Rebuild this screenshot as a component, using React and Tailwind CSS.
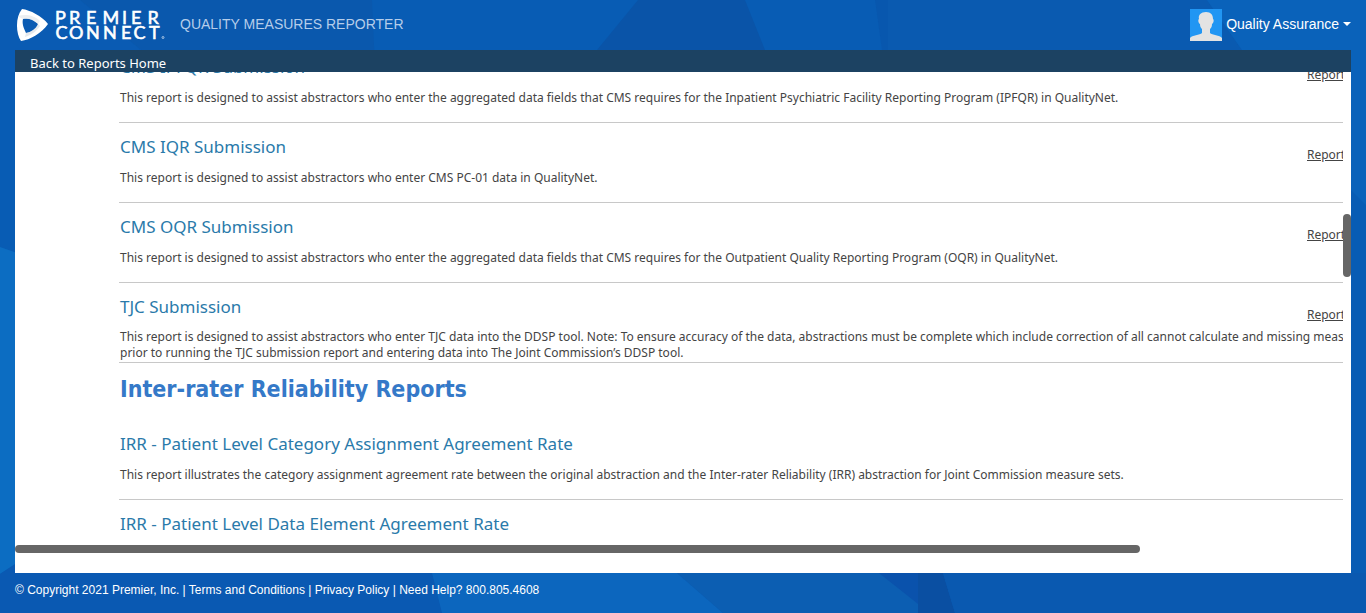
const GROUPS = [
  {
    title: null,
    reports: [
      { name: 'CMS IPFQR Submission', text: 'This report is designed to assist abstractors who enter the aggregated data fields that CMS requires for the Inpatient Psychiatric Facility Reporting Program (IPFQR) in QualityNet.' },
      { name: 'CMS IQR Submission', text: 'This report is designed to assist abstractors who enter CMS PC-01 data in QualityNet.' },
      { name: 'CMS OQR Submission', text: 'This report is designed to assist abstractors who enter the aggregated data fields that CMS requires for the Outpatient Quality Reporting Program (OQR) in QualityNet.' },
      { name: 'TJC Submission', text: 'This report is designed to assist abstractors who enter TJC data into the DDSP tool. Note: To ensure accuracy of the data, abstractions must be complete which include correction of all cannot calculate and missing measures', more: 'prior to running the TJC submission report and entering data into The Joint Commission’s DDSP tool.' },
    ],
  },
  {
    title: 'Inter-rater Reliability Reports',
    reports: [
      { name: 'IRR - Patient Level Category Assignment Agreement Rate', noLink: true, text: 'This report illustrates the category assignment agreement rate between the original abstraction and the Inter-rater Reliability (IRR) abstraction for Joint Commission measure sets.' },
      { name: 'IRR - Patient Level Data Element Agreement Rate', noLink: true },
    ],
  },
];

function Backdrop() {
  return (
    <svg className="absolute inset-0 -z-10 h-full w-full" viewBox="0 0 1366 613" preserveAspectRatio="none" aria-hidden="true">
      <rect width="1366" height="613" fill="#085cb4" />
      <path d="M0 0H80L190 90H0Z" fill="#0a5bb3" />
      <path d="M80 0H372L376 90H190Z" fill="#0a58ad" />
      <path d="M638 0H745L765 50H597Z" fill="#0a54a8" />
      <path d="M875 0H888V50H882Z" fill="#0857ae" />
      <path d="M888 0H1207L1242 50H888Z" fill="#0a5ab0" />
      <path d="M1207 0H1366V205L1346 185L1242 50Z" fill="#0a62ba" />
      <path d="M0 247L20 254V561L0 574Z" fill="#0c6dc2" />
      <path d="M0 574L20 561L432 573L442 613H0Z" fill="#0a59b2" />
      <path d="M432 573H677L723 613H442Z" fill="#0c66be" />
      <path d="M677 573H879L932 613H723Z" fill="#0c5eb2" />
      <path d="M879 573H918V604Z" fill="#0a52ac" />
      <path d="M918 573H943L955 613H918Z" fill="#0a4fa2" />
      <path d="M943 573H1366V613H955Z" fill="#0a59b0" />
    </svg>
  );
}

function Logo() {
  return (
    <a href="#home" aria-label="Premier Connect" className="block text-white">
      <svg width="150" height="34" viewBox="0 0 150 34" aria-hidden="true" className="block">
        <path fill="#fff" fillRule="evenodd" d="M7 1C15 2 27 8 33 16C27 25 15 32 6 33C1 26 0 9 7 1ZM8 11C7 15 8 19 11 25C16 24 21 21 23 16C18 11 13 10 8 11Z" />
        <path fill="#cfd6de" d="M3 8C5 10 7 10 8 11C13 10 18 11 23 16L25 13C19 7 10 6 3 8Z" opacity=".4" />
        <path fill="#bfc8d2" d="M11 25C16 24 21 21 23 16L25 18C22 23 16 27 10 29Z" opacity=".4" />
        <g fill="#fff" stroke="#fff" strokeWidth=".6" fontFamily="Lato, sans-serif" fontSize="18">
          <text x="40 54 71 87.5 107 116 132.5" y="16">PREMIER</text>
          <text x="40.5 54 71 88 106 118.5 134" y="30.5">CONNECT</text>
        </g>
        <circle cx="148" cy="29.5" r="1" fill="none" stroke="#fff" strokeWidth=".6" />
      </svg>
    </a>
  );
}

function Report({ report }) {
  return (
    <li className="flex h-20 border-b border-[#c8c8c8] pl-px">
      <div className="min-w-0 flex-1">
        <h3 className="pt-3 text-[17px] leading-6">
          <a href="#report" className="text-[#2a7aaa]">{report.name}</a>
        </h3>
        {report.text && (
          <p className={report.more ? 'pt-2.5 text-xs leading-4 whitespace-nowrap' : 'pt-[11px] text-xs leading-4 whitespace-nowrap'}>
            {report.text}
            {report.more && <span className="block">{report.more}</span>}
          </p>
        )}
      </div>
      {!report.noLink && (
        <a href="#run" className="w-9 shrink-0 self-start pt-6 text-xs leading-4 whitespace-nowrap underline">Report</a>
      )}
    </li>
  );
}

export default function App() {
  return (
    <div className="relative isolate flex h-screen min-h-96 flex-col overflow-hidden px-[15px] font-['Liberation_Sans',Arial,sans-serif]">
      <Backdrop />
      <header className="flex h-[50px] shrink-0 items-center">
        <Logo />
        <h1 className="ml-[15px] pb-0.5 text-sm leading-5 text-[#b5cdea]">QUALITY MEASURES REPORTER</h1>
        <button type="button" className="ml-auto flex items-center text-sm text-white">
          <svg width="32" height="32" viewBox="0 0 32 32" aria-hidden="true">
            <rect width="32" height="32" fill="#2196f3" />
            <path fill="#e3e3e3" d="M16 3C21 3 23 6 23 10C24 10 24 14 22 15C22 18 21 19 20 20V24C22 26 30 26 32 29V32H0V29C2 26 10 26 12 24V20C11 19 10 18 10 15C8 14 8 10 9 10C8 6 11 3 16 3Z" />
          </svg>
          <span className="ml-1 pb-0.5">Quality Assurance</span>
          <span className="mb-0.5 ml-1 border-x-4 border-t-4 border-x-transparent border-t-white" />
        </button>
      </header>
      <nav className="flex h-[22px] shrink-0 items-end bg-[#1c4262] px-[15px] font-['Noto_Sans',sans-serif] text-[13px] leading-[18px] text-white">
        <a href="#reports">Back to Reports Home</a>
      </nav>
      <main className="relative flex min-h-0 flex-1 flex-col bg-white pr-2 font-['Noto_Sans',sans-serif] text-[#444]">
        <div className="min-h-0 flex-1 overflow-hidden pl-[104px]">
          <div className="-mt-[29px]">
            {GROUPS.map((group, i) => (
              <section key={i}>
                {group.title && <h2 className="mb-[15px] pt-2.5 pl-px font-['DejaVu_Sans_Condensed','Noto_Sans',sans-serif] text-[23px] leading-8 font-bold text-[#3579c8]">{group.title}</h2>}
                <ul>
                  {group.reports.map((report) => <Report key={report.name} report={report} />)}
                </ul>
              </section>
            ))}
          </div>
        </div>
        <div className="h-7 shrink-0" />
        <div className="absolute top-[142px] right-0 h-[63px] w-2 rounded-full bg-[#666]" />
        <div className="absolute bottom-5 left-0 h-2 w-[84.2%] rounded-full bg-[#666]" />
      </main>
      <footer className="h-10 shrink-0 pt-[9px] text-xs leading-4 text-white">
        © Copyright 2021 Premier, Inc. | <a href="#terms">Terms and Conditions</a> | <a href="#privacy">Privacy Policy</a> | Need Help? 800.805.4608
      </footer>
    </div>
  );
}
